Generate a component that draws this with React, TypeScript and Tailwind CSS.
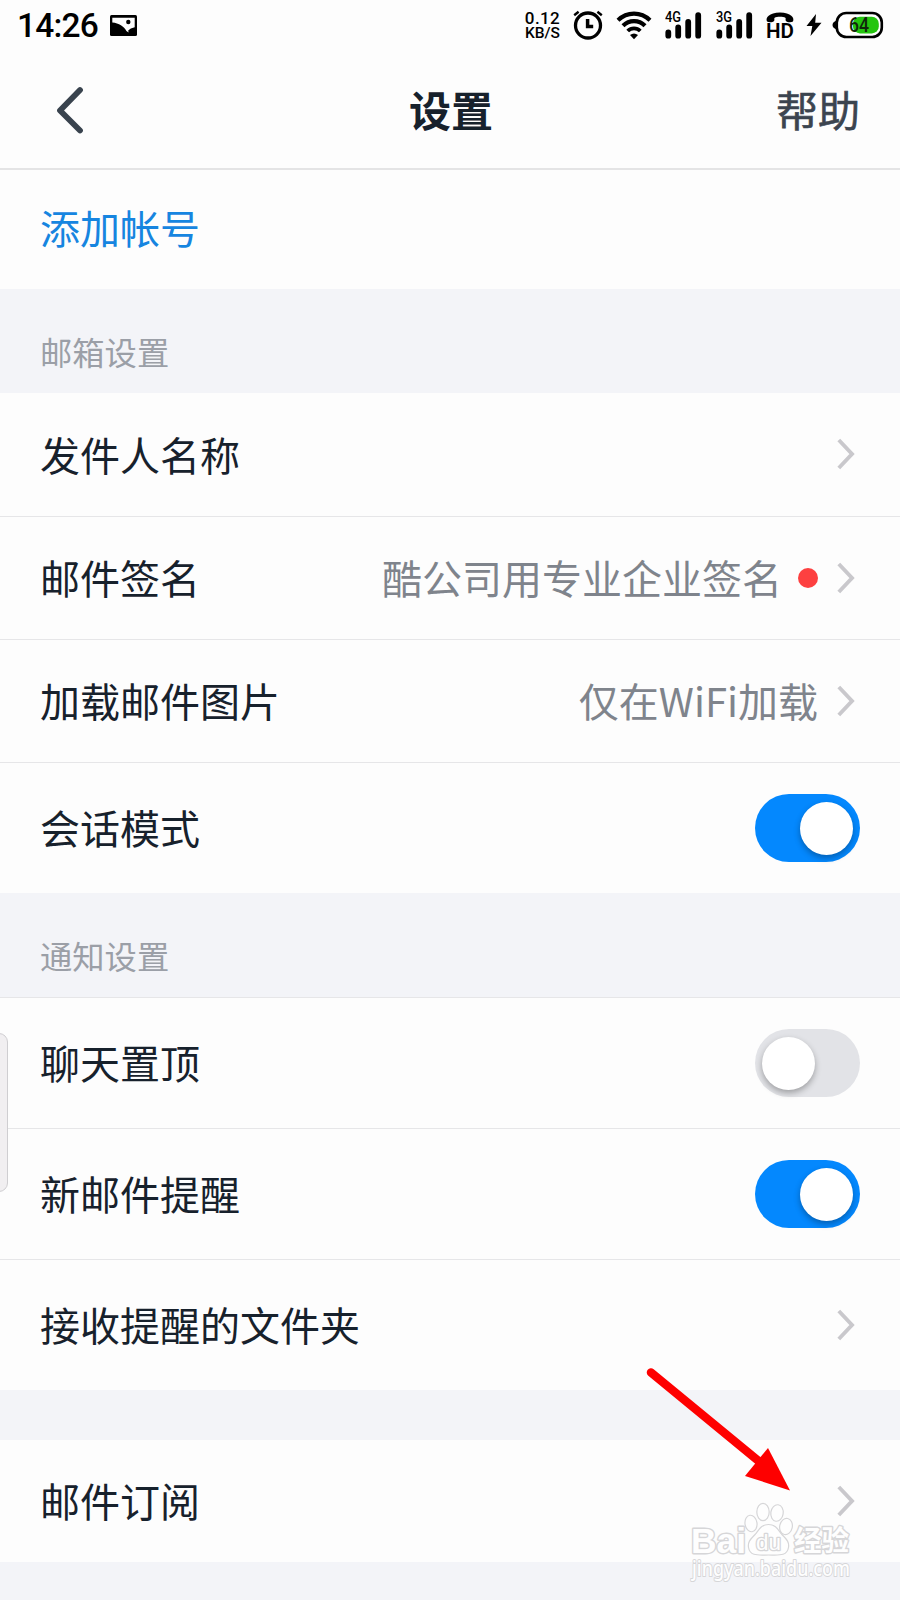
import type { ReactNode } from "react";

const CJK = "font-['Noto_Sans_CJK_SC','Noto_Sans',sans-serif]";

function PictureIcon() {
  return (
    <svg width="27" height="21" viewBox="0 0 27 21" className="ml-[13px]">
      <rect width="27" height="21" rx="1.5" fill="#000" />
      <path d="M2.3 2.800h22.400v9.400l-3.900 1.300-2.600 2 .4 2-2.200-1.400C14 11.500 9 8.200 2.300 7.600z" fill="#fdfdfd" />
      <circle cx="18.300" cy="7" r="2.200" fill="#000" />
    </svg>
  );
}

function AlarmIcon() {
  return (
    <svg width="30" height="30" viewBox="0 0 30 30" fill="none" stroke="#000">
      <circle cx="15" cy="15.500" r="12.500" strokeWidth="3.300" />
      <path d="M14.600 9v7.600h5.600" strokeWidth="3.500" />
      <path d="M1.200 5.200 5.600 1.800M28.800 5.200 24.400 1.800" strokeWidth="2.400" />
    </svg>
  );
}

function WifiIcon() {
  return (
    <svg width="36" height="30" viewBox="0 0 36 30" fill="none" stroke="#000" strokeWidth="4.200">
      <path d="M2 10.200C11 1.400 25 1.400 34 10.200" />
      <path d="M7 15.800C13.200 9.600 22.800 9.600 29 15.800" />
      <path d="M11.700 21C15.300 17.400 20.700 17.400 24.300 21" strokeWidth="3.800" />
      <path d="M14 25Q18 21.800 22 25L18 29.300z" fill="#000" stroke="none" />
    </svg>
  );
}

function Signal({ label }: { label: string }) {
  return (
    <svg width="38" height="30" viewBox="0 0 38 30" stroke="#000" strokeWidth="5.800" strokeLinecap="round">
      <text x="0" y="12" fontSize="14.500" fontWeight="500" stroke="none" textLength="16" lengthAdjust="spacingAndGlyphs" className="font-[Roboto]">
        {label}
      </text>
      <path d="M3.300 22.500v3.200M13.200 17.500v8.200M23.200 12v13.700M33.200 5.200v20.500" />
    </svg>
  );
}

function HdCallIcon() {
  return (
    <svg width="32" height="34" viewBox="-2 -2 32 34">
      <path d="M1 11.500C-.8 8 3 2.500 14 2.500s14.800 5.500 13 9c-1.800 1-6 .8-7.100-.6-.8-1.200.3-2.600-.6-3.200-2-1.300-8.600-1.300-10.600 0-.9.600.2 2-.6 3.200C7 12.300 2.800 12.500 1 11.500z" />
      <text x="0" y="28.300" fontSize="19.500" fontWeight="600" textLength="28" lengthAdjust="spacingAndGlyphs" className="font-[Roboto]">
        HD
      </text>
    </svg>
  );
}

function Battery() {
  return (
    <svg width="52" height="28" viewBox="0 0 52 28">
      <path d="M5 9.500C2 10 .5 12 .5 14S2 18 5 18.500z" />
      <rect x="4.800" y="2" width="45" height="24" rx="9.500" fill="#fff" stroke="#000" strokeWidth="2.600" />
      <rect x="21" y="5.800" width="25.800" height="16.600" rx="7" fill="#24c50f" />
      <text x="17" y="21" fontSize="20" fontWeight="500" fill="#10270c" textLength="20" lengthAdjust="spacingAndGlyphs" className="font-[Roboto]">
        64
      </text>
    </svg>
  );
}

function StatusBar() {
  return (
    <div className="flex h-[50px] items-center pr-[16px] pl-[17px] font-[Roboto,sans-serif] text-black">
      <span className="w-[80px] pt-px text-[33.500px] leading-none font-medium tracking-[-0.8px]">14:26</span>
      <PictureIcon />
      <div className="ml-auto flex items-center">
        <div className="mr-[12px] flex w-[37px] flex-col items-center font-medium">
          <span className="text-[17px] leading-[15px] tracking-[0.4px]">0.12</span>
          <span className="text-[15.500px] leading-[14px]">KB/S</span>
        </div>
        <AlarmIcon />
        <div className="ml-[13px]"><WifiIcon /></div>
        <div className="ml-[13px]"><Signal label="4G" /></div>
        <div className="ml-[13px]"><Signal label="3G" /></div>
        <div className="ml-[10px]"><HdCallIcon /></div>
        <svg width="16" height="24" viewBox="0 0 16 24" className="ml-[10px]">
          <path d="M10 1 .5 13h5.800L4.500 23 15.500 9.800H9.200z" />
        </svg>
        <div className="ml-[10px]"><Battery /></div>
      </div>
    </div>
  );
}

function Header() {
  return (
    <header className="flex h-[120px] items-center justify-between border-b-2 border-[#e4e4e5] pr-[40px] pl-[55px]">
      <svg width="86" height="50" viewBox="0 0 86 50" fill="none" stroke="#39434e" strokeWidth="5.800" strokeLinecap="round" strokeLinejoin="round" className="mt-[2px]">
        <path d="M25 5 5 25.500l20 20" />
      </svg>
      <h1 className="-ml-[15px] text-[42px] leading-none font-bold text-[#17212c]">设置</h1>
      <span className="text-[42px] leading-none text-[#3b444f] [-webkit-text-stroke:0.6px_#3b444f]">帮助</span>
    </header>
  );
}

function Chevron() {
  return (
    <svg width="18" height="32" viewBox="0 0 18 32" fill="none" stroke="#c9c8cc" strokeWidth="3.900" className="mr-[5px] mb-px ml-[19px]">
      <path d="M1.800 2 15 16 1.800 30" />
    </svg>
  );
}

function Toggle({ on = false }: { on?: boolean }) {
  return (
    <span
      role="switch"
      aria-checked={on}
      className={`flex h-[68px] w-[105px] items-center rounded-full px-[7px] ${on ? "justify-end bg-[#0488fe]" : "bg-[#e2e3e7]"}`}
    >
      <span className="size-[53px] rounded-full bg-white shadow-[0_3px_6px_rgba(0,0,0,0.3)]" />
    </span>
  );
}

function Section({ title }: { title: string }) {
  return (
    <div className="flex h-[104px] items-center bg-[#f3f4f8] pt-[20px] pl-[40px] text-[32.300px] leading-none text-[#9b9fa7]">
      {title}
    </div>
  );
}

function Row({ label, className, children }: { label: string; className: string; children: ReactNode }) {
  return (
    <div className={`flex items-center justify-between border-[#e6e6e8] pr-[40px] pl-[40px] text-[40px] leading-none ${className}`}>
      <span className="pb-[2px]">{label}</span>
      <div className="flex items-center text-[#7f848c]">{children}</div>
    </div>
  );
}

function Arrow() {
  return (
    <svg width="150" height="130" viewBox="0 0 150 130" className="absolute top-[1365px] left-[643px]">
      <path d="M8 7.500 118 98" stroke="#fe0000" strokeWidth="8.500" strokeLinecap="round" />
      <path d="M125 83 147 125.500 102 111z" fill="#fe0000" />
    </svg>
  );
}

function Watermark() {
  return (
    <svg width="180" height="100" viewBox="0 0 180 100" className="absolute top-[1500px] left-[680px]">
      <g fill="#fefefe" stroke="#d6d6d8" strokeLinejoin="round">
        <g strokeWidth="2.800" className="[paint-order:stroke]">
          <text x="11" y="53" fontSize="35" fontWeight="700" textLength="55" lengthAdjust="spacingAndGlyphs" className="font-['Liberation_Sans']">
            Bai
          </text>
          <text x="114" y="51" fontSize="28" fontWeight="700" textLength="55" lengthAdjust="spacingAndGlyphs" className="font-['Noto_Sans_CJK_SC']">
            经验
          </text>
          <text x="12" y="76" fontSize="21" strokeWidth="2" textLength="158" lengthAdjust="spacingAndGlyphs" className="font-['Noto_Sans'] font-medium">
            jingyan.baidu.com
          </text>
        </g>
        <g strokeWidth="1.200">
          <ellipse cx="71" cy="23.500" rx="6" ry="8.300" transform="rotate(-8 71 23.500)" />
          <ellipse cx="83" cy="12" rx="6.200" ry="8.600" />
          <ellipse cx="97" cy="13" rx="6.200" ry="8.300" transform="rotate(8 97 13)" />
          <ellipse cx="106" cy="26.500" rx="6.300" ry="8.200" transform="rotate(12 106 26.500)" />
          <path d="M88.500 24.500c-7 0-9.500 5-13 9.500-4 4.500-8 7-7 13.500 1.500 9 10 7.500 20 7.500s18.500 1.500 20-7.500c1-6.500-3-9-7-13.500-3.500-4.500-6-9.500-13-9.500z" />
          <text x="76" y="50" fontSize="22" fontWeight="400" textLength="25" lengthAdjust="spacingAndGlyphs" strokeWidth="2.600" className="font-['Liberation_Sans'] [paint-order:stroke]">
            du
          </text>
        </g>
      </g>
    </svg>
  );
}

export default function App() {
  return (
    <div className={`relative flex h-[1600px] w-[900px] flex-col overflow-hidden bg-[#fdfdfd] text-[#17212c] ${CJK}`}>
      <StatusBar />
      <Header />

      <div className="flex h-[119px] items-center pb-[5px] pl-[40px] text-[40px] leading-none text-[#1685e0]">添加帐号</div>

      {/* Mailbox */}
      <Section title="邮箱设置" />
      <Row label="发件人名称" className="h-[124px] border-b">
        <Chevron />
      </Row>
      <Row label="邮件签名" className="h-[123px] border-b">
        <span className="pb-[2px]">酷公司用专业企业签名</span>
        <span className="ml-[16px] size-[20px] rounded-full bg-[#fd4040]" />
        <Chevron />
      </Row>
      <Row label="加载邮件图片" className="h-[123px] border-b">
        <span className="pb-[2px]">仅在WiFi加载</span>
        <Chevron />
      </Row>
      <Row label="会话模式" className="h-[130px]">
        <Toggle on />
      </Row>

      {/* Notifications */}
      <Section title="通知设置" />
      <Row label="聊天置顶" className="h-[132px] border-y">
        <Toggle />
      </Row>
      <Row label="新邮件提醒" className="h-[131px] border-b">
        <Toggle on />
      </Row>
      <Row label="接收提醒的文件夹" className="h-[130px]">
        <Chevron />
      </Row>

      <div className="h-[50px] bg-[#f3f4f8]" />
      <Row label="邮件订阅" className="h-[122px]">
        <Chevron />
      </Row>
      <div className="grow bg-[#f3f4f8]" />

      {/* Edge gesture handle */}
      <div className="absolute top-[1033px] left-[-10px] h-[159px] w-[18px] rounded-[9px] border border-[#cfced1] bg-[#f1eff1]" />
      <Arrow />
      <Watermark />
    </div>
  );
}
